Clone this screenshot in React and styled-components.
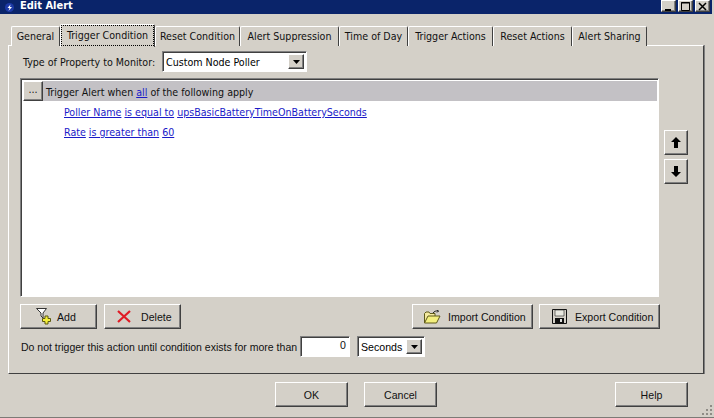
import styled, { createGlobalStyle } from "styled-components";

const Global = createGlobalStyle`
    html, body {
        margin: 0;
        padding: 0;
        background: #d4d0c8;
    }
    * {
        box-sizing: border-box;
    }
`;

const raised = `
    background: #d4d0c8;
    border-top: 1px solid #ffffff;
    border-left: 1px solid #ffffff;
    border-right: 1px solid #404040;
    border-bottom: 1px solid #404040;
    box-shadow: inset -1px -1px 0 #808080;
`;

const sunken = `
    background: #ffffff;
    border-top: 1px solid #808080;
    border-left: 1px solid #808080;
    border-right: 1px solid #ffffff;
    border-bottom: 1px solid #ffffff;
    box-shadow: inset 1px 1px 0 #404040;
`;

// the lower controls are drawn in a narrower face than the tabs and the list
const narrowFont = `
    font-family: "Liberation Sans", Arial, sans-serif;
    font-size: 10.6px;
`;

const Window = styled.div`
    position: relative;
    width: 714px;
    height: 418px;
    overflow: hidden;
    display: flex;
    flex-direction: column;
    background: #d4d0c8;
    border-bottom: 1px solid #7c7a76;
    font-family: "DejaVu Sans Condensed", "Liberation Sans", Arial, sans-serif;
    font-size: 10.6px;
    color: #111;
`;

const TitleBar = styled.div`
    flex: none;
    height: 14px;
    margin-right: 2px;
    display: flex;
    align-items: center;
    background: #0a246a;
    color: #fff;
    padding-left: 5px;
`;

const TitleText = styled.span`
    margin-left: 6px;
    font-weight: 700;
    font-size: 11px;
    margin-top: -4px;
`;

const Controls = styled.div`
    margin-left: auto;
    display: flex;
    align-self: flex-start;
    gap: 2px;
    padding-right: 2px;
`;

const ControlButton = styled.div`
    ${raised}
    width: 15px;
    height: 12px;
    display: flex;
    align-items: center;
    justify-content: center;
    color: #000;
`;

const Body = styled.div`
    flex: none;
    padding: 10px 10px 0 8px;
`;

const TabStrip = styled.div`
    height: 22px;
    padding-left: 3px;
    display: flex;
    align-items: flex-end;
    position: relative;
    z-index: 1;
    margin-bottom: -1px;
`;

const Tab = styled.div`
    width: ${(p) => p.$w}px;
    height: ${(p) => (p.$active ? 23 : 20)}px;
    padding-top: ${(p) => (p.$active ? 4 : 3)}px;
    margin-bottom: ${(p) => (p.$active ? -1 : 0)}px;
    background: #d4d0c8;
    border-top: 1px solid #fff;
    border-left: 1px solid #fff;
    border-right: 1px solid #404040;
    border-radius: 2px 2px 0 0;
    text-align: center;
    white-space: nowrap;
    outline: ${(p) => (p.$active ? "1px dotted #000" : "none")};
    outline-offset: -2px;
`;

const Panel = styled.div`
    height: 329px;
    padding: 5px 15px 0 11px;
    border-top: 1px solid #fff;
    border-left: 1px solid #fff;
    border-right: 1px solid #404040;
    border-bottom: 1px solid #404040;
    box-shadow: 1px 0 0 #808080;
`;

const MonitorRow = styled.div`
    height: 21px;
    padding-left: 3px;
    display: flex;
    align-items: center;
`;

const FieldLabel = styled.label`
    width: 139px;
    white-space: nowrap;
`;

const Combo = styled.div`
    ${sunken}
    width: ${(p) => p.$w}px;
    height: ${(p) => p.$h}px;
    padding: 2px 2px 2px 3px;
    display: flex;
    align-items: center;
    color: #000;
`;

const ComboText = styled.span`
    flex: 1;
    white-space: nowrap;
`;

const ComboArrow = styled.div`
    ${raised}
    width: 16px;
    height: 100%;
    display: flex;
    align-items: center;
    justify-content: center;
`;

const ListRow = styled.div`
    margin-top: 6px;
    display: flex;
    gap: 5px;
`;

const ConditionList = styled.div`
    ${sunken}
    flex: none;
    width: 639px;
    height: 219px;
    padding: 2px 1px 0 2px;
`;

const ListHeader = styled.div`
    height: 20px;
    display: flex;
    align-items: center;
    gap: 3px;
    background: #c3c1c5;
`;

const HeaderText = styled.span`
    padding-top: 1px;
`;

const EllipsisButton = styled.div`
    ${raised}
    width: 20px;
    height: 20px;
    text-align: center;
    line-height: 15px;
`;

const Conditions = styled.div`
    padding: 1px 0 0 41px;
    display: flex;
    flex-direction: column;
`;

const ConditionRow = styled.div`
    height: 20px;
    display: flex;
    align-items: center;
    gap: 3px;
`;

const Link = styled.a`
    color: #1a1ac8;
    text-decoration: underline;
`;

const SideColumn = styled.div`
    padding-top: 52px;
    display: flex;
    flex-direction: column;
    gap: 4px;
`;

const ArrowButton = styled.div`
    ${raised}
    width: 24px;
    height: 25px;
    display: flex;
    align-items: center;
    justify-content: center;
`;

const ActionRow = styled.div`
    margin-top: 7px;
    width: 640px;
    display: flex;
    gap: 7px;
`;

const ActionButton = styled.div`
    ${raised}
    ${narrowFont}
    width: ${(p) => p.$w}px;
    height: 25px;
    margin-left: ${(p) => p.$push || 0}px;
    padding-left: ${(p) => p.$pad}px;
    display: flex;
    align-items: center;
    gap: ${(p) => p.$gap}px;
    white-space: nowrap;
`;

const DelayRow = styled.div`
    ${narrowFont}
    margin-top: 7px;
    padding-left: 1px;
    display: flex;
    align-items: center;
    height: 21px;
`;

const DelayLabel = styled.span`
    width: 279px;
    font-size: 10.5px;
    white-space: nowrap;
`;

const NumberField = styled.div`
    ${sunken}
    width: 50px;
    height: 21px;
    margin-right: 7px;
    padding-right: 3px;
    text-align: right;
    line-height: 17px;
`;

const Footer = styled.div`
    ${narrowFont}
    flex: none;
    padding: 8px 26px 0 275px;
    display: flex;
    gap: 16px;
`;

const DialogButton = styled.div`
    ${raised}
    width: 73px;
    height: 25px;
    margin-left: ${(p) => (p.$right ? "auto" : "0")};
    display: flex;
    align-items: center;
    justify-content: center;
`;

const Grip = styled.svg`
    position: absolute;
    right: 1px;
    bottom: 1px;
`;

const ArrowDown = () => (
    <svg width="7" height="4" viewBox="0 0 7 4">
        <path d="M0 0h7L3.5 4z" fill="#000" />
    </svg>
);

const FilterAddIcon = () => (
    <svg width="17" height="17" viewBox="0 0 17 17">
        <path d="M.5.5h10L7 5v5L5 8V5z" fill="#fff" stroke="#333" />
        <path d="M9 8h3v2.500h2.500v3H12V16H9v-2.500H6.500v-3H9z" fill="#f4ee3c" stroke="#5c5a10" />
    </svg>
);

const DeleteIcon = () => (
    <svg width="14" height="13" viewBox="0 0 14 13">
        <path d="M1 1l12 11M13 1L1 12" stroke="#e01a24" strokeWidth="2.200" fill="none" />
    </svg>
);

const FolderIcon = () => (
    <svg width="17" height="14" viewBox="0 0 17 14">
        <path d="M.5 13V3.500L2 2h3l1 1.500h5V6" fill="#f3e9a0" stroke="#5e5a1a" />
        <path d="M.5 13L4 6h12l-3.500 7z" fill="#f3ef7e" stroke="#5e5a1a" />
        <path d="M9 3C10 1.500 12 .5 14.500 1M14.500 1l-1.500-1M14.500 1L13 2.500" stroke="#222" fill="none" />
    </svg>
);

const SaveIcon = () => (
    <svg width="15" height="15" viewBox="0 0 15 15">
        <path d="M.5.5h14v14H.5z" fill="#d4d0c8" stroke="#111" />
        <path d="M3 1h9v6H3z" fill="#e8e8e0" stroke="#222" strokeWidth=".6" />
        <path d="M3 9h9v5.500H3z" fill="#111" />
        <path d="M8 10h2v3H8z" fill="#ddd" />
    </svg>
);

const App = () => {
    const tabs = [
        ["General", 49],
        ["Trigger Condition", 95, true],
        ["Reset Condition", 85],
        ["Alert Suppression", 99],
        ["Time of Day", 69],
        ["Trigger Actions", 85],
        ["Reset Actions", 79],
        ["Alert Sharing", 75],
    ];

    return (
        <Window>
            <Global />
            <TitleBar>
                <svg width="9" height="9" viewBox="0 0 9 9">
                    <circle cx="4.500" cy="4.500" r="4.500" fill="#1d3aa6" />
                    <path d="M5.500 1.500L2.500 5h2L3.500 8 7 4H5z" fill="#fff" />
                </svg>
                <TitleText>Edit Alert</TitleText>
                <Controls>
                    <ControlButton>
                        <svg width="9" height="9" viewBox="0 0 9 9">
                            <path d="M1 7h6v2H1z" fill="#000" />
                        </svg>
                    </ControlButton>
                    <ControlButton>
                        <svg width="9" height="9" viewBox="0 0 9 9">
                            <path d="M.5.500h8v8h-8zM0 1h9" fill="none" stroke="#000" />
                        </svg>
                    </ControlButton>
                    <ControlButton>
                        <svg width="9" height="9" viewBox="0 0 9 9">
                            <path d="M1 1l7 7M8 1L1 8" stroke="#000" strokeWidth="1.500" />
                        </svg>
                    </ControlButton>
                </Controls>
            </TitleBar>
            <Body>
                <TabStrip>
                    {tabs.map(([label, w, active]) => (
                        <Tab key={label} $w={w} $active={active}>
                            {label}
                        </Tab>
                    ))}
                </TabStrip>
                <Panel>
                    <MonitorRow>
                        <FieldLabel>Type of Property to Monitor:</FieldLabel>
                        <Combo $w={145} $h={21}>
                            <ComboText>Custom Node Poller</ComboText>
                            <ComboArrow>
                                <ArrowDown />
                            </ComboArrow>
                        </Combo>
                    </MonitorRow>
                    <ListRow>
                        <ConditionList>
                            <ListHeader>
                                <EllipsisButton>...</EllipsisButton>
                                <HeaderText>
                                    Trigger Alert when <Link>all</Link> of the following apply
                                </HeaderText>
                            </ListHeader>
                            <Conditions>
                                <ConditionRow>
                                    <Link>Poller Name</Link>
                                    <Link>is equal to</Link>
                                    <Link>upsBasicBatteryTimeOnBatterySeconds</Link>
                                </ConditionRow>
                                <ConditionRow>
                                    <Link>Rate</Link>
                                    <Link>is greater than</Link>
                                    <Link>60</Link>
                                </ConditionRow>
                            </Conditions>
                        </ConditionList>
                        <SideColumn>
                            <ArrowButton>
                                <svg width="10" height="11" viewBox="0 0 10 11">
                                    <path d="M5 0l5 5H7v6H3V5H0z" fill="#000" />
                                </svg>
                            </ArrowButton>
                            <ArrowButton>
                                <svg width="10" height="11" viewBox="0 0 10 11">
                                    <path d="M5 11L0 6h3V0h4v6h3z" fill="#000" />
                                </svg>
                            </ArrowButton>
                        </SideColumn>
                    </ListRow>
                    <ActionRow>
                        <ActionButton $w={77} $pad={15} $gap={4}>
                            <FilterAddIcon />
                            Add
                        </ActionButton>
                        <ActionButton $w={77} $pad={12} $gap={10}>
                            <DeleteIcon />
                            Delete
                        </ActionButton>
                        <ActionButton $w={121} $pad={11} $gap={7} $push={224}>
                            <FolderIcon />
                            Import Condition
                        </ActionButton>
                        <ActionButton $w={121} $pad={12} $gap={8} $push={-1}>
                            <SaveIcon />
                            Export Condition
                        </ActionButton>
                    </ActionRow>
                    <DelayRow>
                        <DelayLabel>Do not trigger this action until condition exists for more than</DelayLabel>
                        <NumberField>0</NumberField>
                        <Combo $w={68} $h={21}>
                            <ComboText>Seconds</ComboText>
                            <ComboArrow>
                                <ArrowDown />
                            </ComboArrow>
                        </Combo>
                    </DelayRow>
                </Panel>
            </Body>
            <Footer>
                <DialogButton>OK</DialogButton>
                <DialogButton>Cancel</DialogButton>
                <DialogButton $right>Help</DialogButton>
            </Footer>
            <Grip width="12" height="12" viewBox="0 0 12 12">
                <path d="M9 1h2v2H9zM5 5h2v2H5zM9 5h2v2H9zM1 9h2v2H1zM5 9h2v2H5zM9 9h2v2H9z" fill="#8f8c86" />
            </Grip>
        </Window>
    );
};

export default App;
